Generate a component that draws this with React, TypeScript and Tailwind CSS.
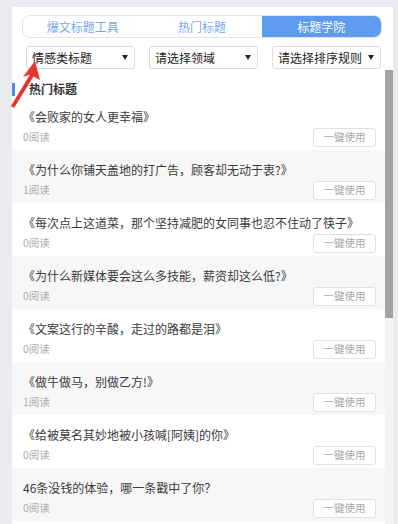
import React from "react";

const items = [
  { t: "《会败家的女人更幸福》", r: 0 },
  { t: "《为什么你铺天盖地的打广告，顾客却无动于衷?》", r: 1 },
  { t: "《每次点上这道菜，那个坚持减肥的女同事也忍不住动了筷子》", r: 0 },
  { t: "《为什么新媒体要会这么多技能，薪资却这么低?》", r: 0 },
  { t: "《文案这行的辛酸，走过的路都是泪》", r: 0 },
  { t: "《做牛做马，别做乙方!》", r: 1 },
  { t: "《给被莫名其妙地被小孩喊[阿姨]的你》", r: 0 },
  { t: "46条没钱的体验，哪一条戳中了你？", r: 0 },
];

function Caret() {
  return (
    <svg width="6" height="5" viewBox="0 0 6 5" className="shrink-0">
      <polygon points="0,0 6,0 3,5" fill="#222" />
    </svg>
  );
}

function Select({ label }: { label: string }) {
  return (
    <div className="w-[109px] h-[23px] border border-[#dcdcdc] rounded-[3px] bg-white flex items-center justify-between pl-[5px] pr-[6px] text-[12px] text-[#222] leading-none">
      <span>{label}</span>
      <Caret />
    </div>
  );
}

export default function App() {
  return (
    <div
      className="relative h-screen overflow-hidden bg-[#e9ebef] pt-[7px] pl-[12px]"
      style={{ fontFamily: '"Noto Sans CJK SC", "Microsoft YaHei", sans-serif' }}
    >
      <div className="w-[381px] bg-white h-[600px] flex flex-col">
        <div className="pt-[8px] pl-[10px]">
          <div className="w-[360px] h-[23px] border border-[#e3e3e3] rounded-[8px] overflow-hidden flex text-[12px] leading-none">
            <div className="flex-1 flex items-center justify-center text-[#79a7ea]">爆文标题工具</div>
            <div className="flex-1 flex items-center justify-center text-[#79a7ea]">热门标题</div>
            <div className="flex-1 flex items-center justify-center bg-[#5c9bed] text-white">标题学院</div>
          </div>
        </div>
        <div className="mt-[8px] mb-[1px] pl-[14px] flex gap-[14px]">
          <Select label="情感类标题" />
          <Select label="请选择领域" />
          <Select label="请选择排序规则" />
        </div>
        <div className="flex flex-1">
          <div className="flex-1">
            <div className="pt-[12px] pb-[1px]">
              <div className="h-[14px] flex items-center">
                <div className="w-[3px] h-[13px] bg-[#4a8de8]" />
                <span className="ml-[14px] text-[12px] font-bold text-[#333] leading-none">热门标题</span>
              </div>
            </div>
            {items.map((it, i) => (
              <div
                key={i}
                className={`h-[53px] pl-[11px] pr-[9px] pt-[12px] ${i % 2 === 1 ? "bg-[#f7f7f7]" : "bg-white"}`}
              >
                <div className="h-[16px] leading-[16px] text-[12px] text-[#3a3a3a] whitespace-nowrap">{it.t}</div>
                <div className="mt-[3px] flex items-center justify-between">
                  <span className="text-[10.5px] text-[#ababab] leading-none">{it.r}阅读</span>
                  <div className="w-[63px] h-[19px] border border-[#e0e0e0] rounded-[3px] bg-white flex items-center justify-center text-[10.5px] text-[#a8a8a8] leading-none">
                    一键使用
                  </div>
                </div>
              </div>
            ))}
          </div>
          <div className="w-[8px] bg-[#f3f3f3]">
            <div className="h-[248px] bg-[#a3a3a3]" />
          </div>
        </div>
      </div>
      <svg className="absolute left-0 top-0" width="60" height="120" viewBox="0 0 60 120">
        <polygon
          points="35,61 40,80 33.5,76.5 14,108 11,106 30,74.5 23,77"
          fill="#e8322b"
        />
      </svg>
    </div>
  );
}
